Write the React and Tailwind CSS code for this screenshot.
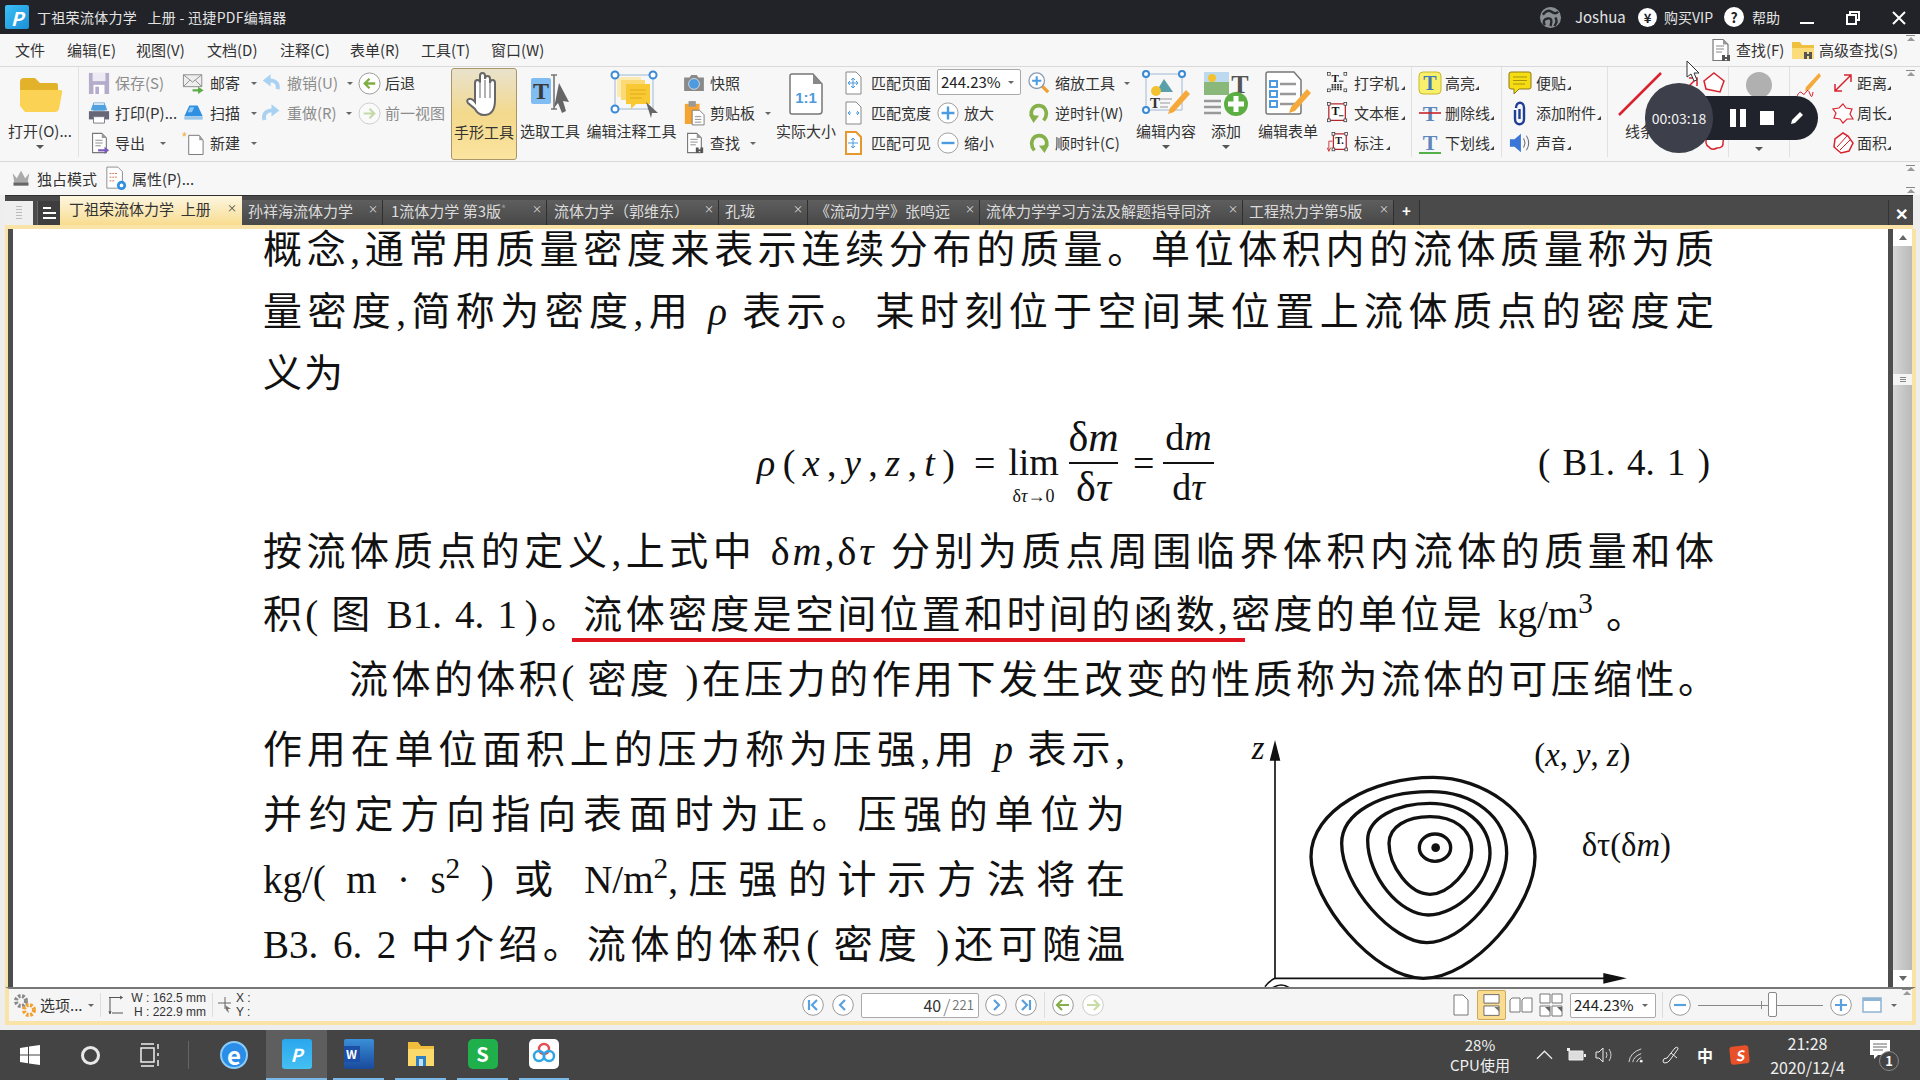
import React from "react";

const Arrow = ({ dark }) => (
  <span className={dark ? "inline-block w-0 h-0 border-x-[4px] border-x-transparent border-t-[4px] border-t-[#555]" : "inline-block w-0 h-0 border-x-[3px] border-x-transparent border-t-[3px] border-t-[#666]"} />
);
const Corner = () => (
  <svg viewBox="0 0 4 4" className="w-[4px] h-[4px] self-end mb-[8px] -ml-[3px] shrink-0"><polygon points="4,0 4,4 0,4" fill="#444" /></svg>
);

const Sv = ({ c, v = "0 0 24 24", children }) => <svg viewBox={v} className={c}>{children}</svg>;

const PageD = ({ stroke = "#777", fill = "#fff" }) => (
  <>
    <path d="M5 1.5h10l5 5v16H5z" fill={fill} stroke={stroke} strokeWidth="1.2" />
    <path d="M15 1.5v5h5z" fill="#999" />
  </>
);

const Nodes = ({ pts }) => pts.map(([x, y], i) => <rect key={i} x={x - 1.5} y={y - 1.5} width="3" height="3" fill="#fff" stroke="#333" strokeWidth="0.8" />);

const I = {
  save: <Sv c="w-[22px] h-[24px]"><path d="M1 1h22v23H1z" fill="#b5abcb" /><path d="M5 1h14v9H5z" fill="#ecebf3" /><path d="M6 14h12v10H6z" fill="#fff" /><path d="M8 16h4v8H8z" fill="#b5abcb" /></Sv>,
  print: <Sv c="w-[22px] h-[24px]"><path d="M6 1h12v8H6z" fill="#fff" stroke="#6aa5d8" /><path d="M5 3h14l2 6H3z" fill="#4fa1e0" /><path d="M1 10h22v9H1z" fill="#667" /><path d="M6 16h12v7H6z" fill="#fff" stroke="#778" /></Sv>,
  exp: <Sv c="w-[22px] h-[24px]"><PageD /><path d="M8 9h8M8 12h8M8 15h6" stroke="#888" /><path d="M11 20h8" stroke="#7d5bb8" strokeWidth="2.4" /><path d="M18 16l5 4-5 4z" fill="#7d5bb8" /></Sv>,
  mail: <Sv c="w-[23px] h-[22px]"><path d="M1 3h20v13H1z" fill="#eee" stroke="#888" /><path d="M1 3l10 8 10-8M1 16l7-7M21 16l-7-7" fill="none" stroke="#888" /><path d="M11 20h8" stroke="#5daa46" strokeWidth="2.4" /><path d="M17 16l6 4-6 4z" fill="#5daa46" /></Sv>,
  scan: <Sv c="w-[24px] h-[20px]"><path d="M7 3h10l6 13H1z" fill="#2f8fe0" /><path d="M8 5h5l-3 6H5z" fill="#8cc8f5" /><path d="M1 16h22v4H1z" fill="#9cc7ea" /></Sv>,
  neu: <Sv c="w-[24px] h-[26px]"><path d="M7 4h11l4 5v15H7z" fill="#fff" stroke="#777" /><path d="M18 4v5h4z" fill="#999" /><text x="0" y="10" fontSize="13" fill="#f0a92c" fontFamily="Liberation Sans">*</text></Sv>,
  undo: <Sv c="w-[21px] h-[22px]"><path d="M19 19c1-5-1-10-9-10" fill="none" stroke="#a9d2f2" strokeWidth="4.5" /><path d="M11 2L2 9l9 7z" fill="#a9d2f2" /></Sv>,
  redo: <Sv c="w-[21px] h-[22px]"><path d="M4 20c-2-6 1-11 9-11" fill="none" stroke="#a9d2f2" strokeWidth="4.5" /><path d="M12 2l9 7-9 7z" fill="#a9d2f2" /></Sv>,
  back: <Sv c="w-[23px] h-[23px]"><circle cx="12" cy="12" r="11" fill="#fff" stroke="#999" /><path d="M18 12H8M12 7l-5 5 5 5" fill="none" stroke="#7fae45" strokeWidth="2.4" /></Sv>,
  fwd: <Sv c="w-[23px] h-[23px]"><circle cx="12" cy="12" r="11" fill="#fafafa" stroke="#ccc" /><path d="M6 12h10M12 7l5 5-5 5" fill="none" stroke="#c5d8a8" strokeWidth="2.2" /></Sv>,
  camera: <Sv c="w-[22px] h-[18px]" v="0 0 24 20"><path d="M1 4h6l2-3h6l2 3h6v15H1z" fill="#8a8a8a" /><circle cx="12" cy="11" r="6" fill="#4c9be0" stroke="#ddd" /></Sv>,
  clip: <Sv c="w-[22px] h-[26px]" v="0 0 24 28"><path d="M2 4h16v22H2z" fill="#f5a431" /><path d="M6 1h8v6H6z" fill="#999" /><path d="M10 11h8l5 5v11H10z" fill="#fff" stroke="#777" /><path d="M13 18h7M13 21h7M13 24h7" stroke="#888" /></Sv>,
  find: <Sv c="w-[24px] h-[26px]"><PageD /><path d="M8 8h8M8 11h8M8 14h6" stroke="#888" /><path d="M14 17h3v6h-3zM19 17h3v6h-3z" fill="#555" /><path d="M16 19h4v2h-4z" fill="#555" /></Sv>,
  fitP: <Sv c="w-[17px] h-[24px]" v="0 0 17 24"><path d="M1 1h10l5 5v17H1z" fill="#fff" stroke="#888" /><path d="M8 7v10M3 12h10M8 7l-2 2M8 7l2 2M8 17l-2-2M8 17l2-2M3 12l2-2M3 12l2 2M13 12l-2-2M13 12l-2 2" stroke="#4c9be0" fill="none" /></Sv>,
  fitW: <Sv c="w-[17px] h-[24px]" v="0 0 17 24"><path d="M1 1h10l5 5v17H1z" fill="#fff" stroke="#888" /><path d="M3 12h3M11 12h3M3 12l2-2M3 12l2 2M14 12l-2-2M14 12l-2 2" stroke="#4c9be0" fill="none" /></Sv>,
  fitV: <Sv c="w-[17px] h-[24px]" v="0 0 17 24"><path d="M1 1h10l5 5v17H1z" fill="#fff" stroke="#e8962e" strokeWidth="2" /><path d="M8 7v10M3 12h10M8 7l-2 2M8 7l2 2M8 17l-2-2M8 17l2-2" stroke="#4c9be0" fill="none" /></Sv>,
  plus: <Sv c="w-[22px] h-[22px]"><circle cx="12" cy="12" r="11" fill="#fff" stroke="#999" /><path d="M12 5v14M5 12h14" stroke="#4c9be0" strokeWidth="2.6" /></Sv>,
  minus: <Sv c="w-[22px] h-[22px]"><circle cx="12" cy="12" r="11" fill="#fff" stroke="#999" /><path d="M5 12h14" stroke="#4c9be0" strokeWidth="2.6" /></Sv>,
  zoom: <Sv c="w-[24px] h-[24px]"><path d="M15 15l7 7" stroke="#f0a030" strokeWidth="3.5" /><circle cx="9.5" cy="9.5" r="8.5" fill="#fff" stroke="#8a9bb0" strokeWidth="1.4" /><path d="M9.5 4.5v10M4.5 9.5h10" stroke="#4c9be0" strokeWidth="2.2" /></Sv>,
  ccw: <Sv c="w-[22px] h-[24px]"><path d="M7 19c-7-7-2-15 5-15s11 9 5 16" fill="none" stroke="#86b04a" strokeWidth="4" /><path d="M1 14l11 1-6 8z" fill="#86b04a" /></Sv>,
  cw: <Sv c="w-[22px] h-[24px]"><path d="M17 19c7-7 2-15-5-15S1 13 7 20" fill="none" stroke="#86b04a" strokeWidth="4" /><path d="M23 14l-11 1 6 8z" fill="#86b04a" /></Sv>,
  type: <Sv c="w-[22px] h-[22px]"><Nodes pts={[[2, 2], [20, 2], [2, 20], [20, 20]]} /><text x="5" y="11" fontSize="12" fontWeight="700" fontFamily="Liberation Serif" fill="#111">T</text><path d="M13 10h5" stroke="#111" /><path d="M5 14h12M5 16.500h12M5 19h12" stroke="#333" strokeWidth="1.8" strokeDasharray="2 1" /></Sv>,
  tbox: <Sv c="w-[22px] h-[22px]"><path d="M2 2h18v18H2z" fill="#fff" stroke="#b3262e" strokeWidth="1.4" /><Nodes pts={[[2, 2], [20, 2], [2, 20], [20, 20]]} /><text x="5" y="14" fontSize="13" fontWeight="700" fontFamily="Liberation Serif" fill="#111">T</text><path d="M13 15h5" stroke="#111" /></Sv>,
  callout: <Sv c="w-[22px] h-[22px]"><path d="M7 2h14v17H7z" fill="#fff" stroke="#b3262e" strokeWidth="1.4" /><Nodes pts={[[7, 2], [21, 2], [7, 19], [21, 19]]} /><text x="9" y="13" fontSize="11" fontWeight="700" fontFamily="Liberation Serif" fill="#111">T.</text><path d="M6 10H2v11M0 17l2 4 2-4" fill="none" stroke="#c33" /></Sv>,
  high: <Sv c="w-[24px] h-[24px]"><rect x="1" y="1" width="22" height="22" rx="4" fill="#f8f06a" stroke="#c9b92c" /><text x="12" y="19" textAnchor="middle" fontSize="20" fontWeight="700" fontFamily="Liberation Serif" fill="#3d78b8">T</text></Sv>,
  strike: <Sv c="w-[24px] h-[24px]"><text x="12" y="20" textAnchor="middle" fontSize="22" fontWeight="700" fontFamily="Liberation Serif" fill="#5d86bd">T</text><path d="M1 12h22" stroke="#c8232c" strokeWidth="1.6" /></Sv>,
  under: <Sv c="w-[24px] h-[24px]"><text x="12" y="19" textAnchor="middle" fontSize="22" fontWeight="700" fontFamily="Liberation Serif" fill="#5d86bd">T</text><path d="M1 22h22" stroke="#55b04a" strokeWidth="2" /></Sv>,
  note: <Sv c="w-[24px] h-[24px]"><path d="M3 1h18q2 0 2 2v13q0 2-2 2H11l-5 5v-5H3q-2 0-2-2V3q0-2 2-2z" fill="#f6dc12" stroke="#8b7a12" /><path d="M5 6h14M5 9.500h14M5 13h12" stroke="#a89412" /></Sv>,
  attach: <Sv c="w-[24px] h-[26px]"><path d="M8 7c0-7 8-7 8 0v11c0 7-9 7-9 0V9M11.500 8v10" fill="none" stroke="#1f3f97" strokeWidth="2.4" /></Sv>,
  sound: <Sv c="w-[24px] h-[22px]"><path d="M1 8h5l7-6v20l-7-6H1z" fill="#3a76d8" /><path d="M16 7q3 5 0 10M19 4q5 8 0 16" fill="none" stroke="#556" /></Sv>,
  crown: <Sv c="w-[22px] h-[20px]"><path d="M2 5l5 6 5-9 5 9 5-6-2 11H4z" fill="#aaa" /><path d="M3 16h18v4H3z" fill="#666" /></Sv>,
  prop: <Sv c="w-[22px] h-[26px]" v="0 0 24 28"><path d="M2 1h12l5 5v18H2z" fill="#fff" stroke="#888" /><path d="M5 8h8M5 12h8M5 16h6" stroke="#d06a4c" strokeDasharray="2 1" /><circle cx="18" cy="21" r="5" fill="#2f8fe0" /><circle cx="18" cy="21" r="2" fill="#fff" /></Sv>,
};

const Row = ({ icon, text, off, arrow, corner, g = "gap-[5px]", ib = "w-[22px]", arrowCls = "ml-[10px]" }) => (
  <div className={"flex items-center h-[30px] whitespace-nowrap " + g}>
    <span className={"flex items-center justify-center shrink-0 " + ib}>{icon}</span>
    <span className={off ? "text-[#8c8c8c]" : "text-[#333]"}>{text}</span>
    {arrow && <span className={"flex items-center " + arrowCls}><Arrow /></span>}
    {corner && <Corner />}
  </div>
);

const Big = ({ w, icon, text, arrow }) => (
  <div className={"flex flex-col items-center shrink-0 " + w}>
    <div className="h-[54px] flex items-center justify-center">{icon}</div>
    <div className="h-[20px] leading-[20px] text-[#333] whitespace-nowrap">{text}</div>
    {arrow && <div className="h-[11px] flex items-center"><Arrow dark /></div>}
  </div>
);

const Tab = ({ w, text, star, pl = "pl-[6px]" }) => (
  <div className={"h-[25px] pb-[3px] relative flex items-center border-r border-r-[#2f2f2f] bg-gradient-to-b from-[#5e5e5e] to-[#484848] text-[#dcdcdc] whitespace-nowrap shrink-0 " + w + " " + pl}>
    {text}{star && <span className="text-[#999] text-[11px] -mt-[6px]">*</span>}
    <span className="absolute right-[4px] top-[3px] text-[10px] leading-[12px] text-[#ddd]">×</span>
  </div>
);

const NavBtn = ({ d, c = "#5aa0dd", m, faded }) => (
  <svg viewBox="0 0 22 22" className={"w-[22px] h-[22px] shrink-0 " + (m || "")}>
    <circle cx="11" cy="11" r="10.300" fill="#fff" stroke={faded ? "#ccc" : "#9a9a9a"} />
    <path d={d} fill="none" stroke={c} strokeWidth="2.200" />
  </svg>
);

const Line = ({ c, children }) => (
  <div className={"[text-align:justify] [text-align-last:justify] " + c}>{children}</div>
);

const Tbtn = ({ c, children }) => <div className={"flex items-center justify-center shrink-0 " + c}>{children}</div>;

const Chev = ({ c }) => (
  <div className={"absolute flex flex-col items-center gap-[1px] " + c}>
    <span className="w-[9px] h-[1px] bg-[#888]" />
    <span className="w-0 h-0 border-x-[4px] border-x-transparent border-b-[4px] border-b-[#999]" />
  </div>
);

const it = "italic";

export default function App() {
  return (
    <div className="w-[1920px] h-[1080px] relative overflow-hidden flex flex-col bg-[#eeeeee] text-[15px] leading-[20px] font-['Noto_Sans_CJK_SC','Noto_Sans',sans-serif]">
      {/* Title bar */}
      <div className="h-[34px] bg-[#212328] flex items-center text-[#e4e4e4] shrink-0 whitespace-nowrap">
        <div className="ml-[5px] w-[24px] h-[24px] rounded-[2px] bg-gradient-to-br from-[#3cc0f5] to-[#1a8fd8] flex items-center justify-center text-white font-bold italic text-[19px] leading-none">P</div>
        <span className="ml-[8px] text-[14px] tracking-[0.3px]">丁祖荣流体力学&nbsp;&nbsp;&nbsp;上册&nbsp;-&nbsp;迅捷PDF编辑器</span>
        <div className="ml-auto flex items-center">
          <svg viewBox="0 0 24 24" className="w-[23px] h-[23px]"><circle cx="12" cy="12" r="11" fill="#8a8f94" /><path d="M4 9q5-6 9-3t7 0M6 20q-3-6 3-7t3 8M16 21q4-5 1-9" fill="none" stroke="#26282c" strokeWidth="2.500" /></svg>
          <span className="ml-[13px] text-[15px] w-[47px]">Joshua</span>
          <span className="ml-[16px] w-[19px] h-[19px] rounded-full bg-white text-[#212328] font-bold text-[13px] leading-none flex items-center justify-center">¥</span>
          <span className="ml-[7px] text-[14px] w-[50px]">购买VIP</span>
          <span className="ml-[10px] w-[20px] h-[20px] rounded-full bg-white text-[#212328] font-bold text-[14px] leading-none flex items-center justify-center">?</span>
          <span className="ml-[8px] text-[14px] w-[28px]">帮助</span>
          <span className="ml-[20px] w-[14px] h-[2px] bg-white mt-[12px] mb-0" />
          <svg viewBox="0 0 14 14" className="ml-[32px] w-[14px] h-[14px] mt-[2px]"><path d="M4 4V1h9v8h-3M1 4h9v9H1z" fill="none" stroke="#fff" strokeWidth="2" /></svg>
          <svg viewBox="0 0 14 14" className="ml-[32px] mr-[14px] w-[14px] h-[14px] mt-[2px]"><path d="M1 1l12 12M13 1L1 13" stroke="#fff" strokeWidth="2" /></svg>
        </div>
      </div>

      {/* Menu */}
      <div className="h-[33px] bg-[#f7f7f7] border-b border-b-[#d9d9d9] flex items-center pl-[15px] text-[#333] shrink-0 whitespace-nowrap">
        <span className="w-[52px]">文件</span>
        <span className="w-[69px]">编辑(E)</span>
        <span className="w-[71px]">视图(V)</span>
        <span className="w-[73px]">文档(D)</span>
        <span className="w-[70px]">注释(C)</span>
        <span className="w-[71px]">表单(R)</span>
        <span className="w-[70px]">工具(T)</span>
        <span>窗口(W)</span>
        <div className="ml-auto mr-[22px] flex items-center">
          {I.find}
          <span className="ml-[4px] w-[55px]">查找(F)</span>
          <svg viewBox="0 0 24 24" className="w-[24px] h-[24px]"><path d="M1 4h8l2 3h12v14H1z" fill="#f0c040" /><path d="M1 10h22v11H1z" fill="#fbdc7a" /><path d="M13 14h3v7h-3zM18 14h3v7h-3zM15 16h4v2h-4z" fill="#555" /></svg>
          <span className="ml-[4px]">高级查找(S)</span>
        </div>
      </div>

      {/* Ribbon */}
      <div className="h-[95px] bg-[#f7f7f7] border-b border-b-[#d9d9d9] flex shrink-0 relative">
        <div className="w-[79px] h-[90px] shrink-0 border-r border-r-[#e2e2e2] pl-[4px]">
          <Big w="w-[72px]" text="打开(O)..." arrow icon={
            <svg viewBox="0 0 46 36" className="w-[46px] h-[36px]"><path d="M3 6q0-4 4-4h11l5 5h16q2 0 2 2v8H3z" fill="#e3b22b" /><path d="M3 30V14h40q3 0 2 3l-3 16q-1 3-4 3H8z" fill="#fcd255" /></svg>
          } />
        </div>
        <div className="w-[103px] pl-[9px] shrink-0 pt-[1px]">
          <Row icon={I.save} text="保存(S)" off />
          <Row icon={I.print} text="打印(P)..." />
          <Row icon={I.exp} text="导出" arrow />
        </div>
        <div className="w-[79px] shrink-0 pt-[1px]">
          <Row ib="w-[23px]" icon={I.mail} text="邮寄" arrow arrowCls="ml-[6px]" />
          <Row ib="w-[23px]" icon={I.scan} text="扫描" arrow arrowCls="ml-[6px]" />
          <Row ib="w-[23px]" icon={I.neu} text="新建" arrow arrowCls="ml-[6px]" />
        </div>
        <div className="w-[97px] shrink-0 pt-[1px]">
          <Row ib="w-[21px]" icon={I.undo} text="撤销(U)" off arrow arrowCls="ml-[4px]" />
          <Row ib="w-[21px]" icon={I.redo} text="重做(R)" off arrow arrowCls="ml-[4px]" />
        </div>
        <div className="w-[93px] shrink-0 pt-[1px]">
          <Row ib="w-[23px]" g="gap-[4px]" icon={I.back} text="后退" />
          <Row ib="w-[23px]" g="gap-[4px]" icon={I.fwd} text="前一视图" off />
        </div>
        <div className="w-[66px] h-[92px] mt-[1px] shrink-0 rounded-[3px] border border-[#a8976a] bg-gradient-to-b from-[#e9e2cc] via-[#f3d98c] to-[#fbe49f] flex flex-col items-center">
          <div className="h-[53px] flex items-center">
            <svg viewBox="0 0 36 48" className="w-[36px] h-[48px]"><path d="M9 30V11q0-3 2.500-3t2.500 3v-7q0-3 2.500-3t2.500 3v3q0-3 2.500-3t2.500 3v4q0-3 2.500-3t2.500 3v17q0 15-11 15-6 0-9-6L2 31q-2-3 1-4t6 3z" fill="#fff" stroke="#666" strokeWidth="2" /><path d="M14 10v16M19 8v18M24 11v15" stroke="#999" strokeWidth="1.500" /></svg>
          </div>
          <div className="h-[20px] text-[#333] whitespace-nowrap">手形工具</div>
        </div>
        <Big w="w-[66px]" text="选取工具" icon={
          <svg viewBox="0 0 40 44" className="w-[40px] h-[44px]"><rect x="1" y="6" width="20" height="26" rx="2" fill="#7fbdf2" /><text x="11" y="27" textAnchor="middle" fontSize="24" fontWeight="700" fontFamily="Liberation Serif" fill="#3a3a3a">T</text><path d="M24 3v34M21 3h6M21 37h6" stroke="#777" strokeWidth="1.600" /><path d="M29 11l10 19-6-1 3 10-4 2-4-10-4 5z" fill="#666" /></svg>
        } />
        <Big w="w-[97px]" text="编辑注释工具" icon={
          <svg viewBox="0 0 50 48" className="w-[50px] h-[48px] ml-[6px]"><path d="M5 5h38v34H5z" fill="none" stroke="#9fb8d2" /><path d="M7 7h24v20H7z" fill="#fdeab0" /><path d="M11 10h24v20H11z" fill="#fbd975" /><path d="M16 14h24v20H26l-5 5v-5h-5z" fill="#f9c933" /><path d="M20 20h16M20 24h16M20 28h12" stroke="#e3a91c" /><circle cx="5" cy="5" r="3.500" fill="#fff" stroke="#3a8ad8" strokeWidth="2" /><circle cx="43" cy="5" r="3.500" fill="#fff" stroke="#3a8ad8" strokeWidth="2" /><circle cx="5" cy="39" r="3.500" fill="#fff" stroke="#3a8ad8" strokeWidth="2" /><path d="M36 32l12 11-6 0-1 5z" fill="#666" /></svg>
        } />
        <div className="w-[96px] pl-[3px] shrink-0 pt-[1px]">
          <Row icon={I.camera} text="快照" />
          <Row icon={I.clip} text="剪贴板" arrow arrowCls="ml-[5px]" />
          <Row icon={I.find} text="查找" arrow arrowCls="ml-[5px]" />
        </div>
        <Big w="w-[60px]" text="实际大小" icon={
          <svg viewBox="0 0 34 42" className="w-[34px] h-[42px]"><path d="M3 1h21l9 10v27q0 3-3 3H3q-2 0-2-2V3q0-2 2-2z" fill="#fff" stroke="#777" strokeWidth="1.500" /><path d="M24 1v10h9z" fill="#888" /><text x="17" y="30" textAnchor="middle" fontSize="15" fontWeight="700" fontFamily="Liberation Sans" fill="#4c9be0">1:1</text></svg>
        } />
        <div className="w-[101px] pl-[9px] shrink-0 pt-[1px]">
          <Row ib="w-[17px]" g="gap-[9px]" icon={I.fitP} text="匹配页面" />
          <Row ib="w-[17px]" g="gap-[9px]" icon={I.fitW} text="匹配宽度" />
          <Row ib="w-[17px]" g="gap-[9px]" icon={I.fitV} text="匹配可见" />
        </div>
        <div className="w-[91px] shrink-0 pt-[1px]">
          <div className="h-[30px] flex items-center">
            <div className="w-[84px] h-[26px] bg-white border border-[#aaa] rounded-[2px] flex items-center pl-[3px] text-[#222] text-[15px] -mt-[2px]">244.23%<span className="ml-[7px] flex"><Arrow /></span></div>
          </div>
          <Row icon={I.plus} text="放大" />
          <Row icon={I.minus} text="缩小" />
        </div>
        <div className="w-[108px] shrink-0 pt-[1px]">
          <Row icon={I.zoom} text="缩放工具" arrow arrowCls="ml-[4px]" />
          <Row icon={I.ccw} text="逆时针(W)" />
          <Row icon={I.cw} text="顺时针(C)" />
        </div>
        <Big w="w-[60px]" text="编辑内容" arrow icon={
          <svg viewBox="0 0 48 48" className="w-[48px] h-[48px]"><path d="M4 4h36v36H4z" fill="none" stroke="#9fb8d2" /><path d="M14 22l8-13 9 13z" fill="#5aa0a8" /><circle cx="14" cy="21" r="5" fill="#f2c230" /><text x="8" y="38" fontSize="15" fontWeight="700" fontFamily="Liberation Serif" fill="#333">T</text><path d="M18 29h12M18 33h10M18 37h8" stroke="#999" /><path d="M44 20l4 4-16 18-6 2 2-6z" fill="#f6a93b" /><circle cx="4" cy="4" r="3" fill="#fff" stroke="#3a8ad8" strokeWidth="2" /><circle cx="40" cy="4" r="3" fill="#fff" stroke="#3a8ad8" strokeWidth="2" /><circle cx="4" cy="40" r="3" fill="#fff" stroke="#3a8ad8" strokeWidth="2" /></svg>
        } />
        <Big w="w-[60px]" text="添加" arrow icon={
          <svg viewBox="0 0 46 46" className="w-[46px] h-[46px]"><path d="M1 1h25v23H1z" fill="#8ab87a" /><path d="M1 1h25v10H1z" fill="#bcd9ef" /><circle cx="9" cy="7" r="4" fill="#f2c230" /><text x="37" y="22" textAnchor="middle" fontSize="26" fontWeight="700" fontFamily="Liberation Serif" fill="#555">T</text><path d="M1 30h17M1 36h17M1 42h17" stroke="#999" strokeWidth="2.500" /><circle cx="33" cy="33" r="12" fill="#5cae42" /><path d="M33 25v16M25 33h16" stroke="#fff" strokeWidth="5" /></svg>
        } />
        <Big w="w-[64px]" text="编辑表单" icon={
          <svg viewBox="0 0 46 46" className="w-[46px] h-[46px]"><path d="M3 1h26l7 8v32q0 2-2 2H3q-2 0-2-2V3q0-2 2-2z" fill="#fff" stroke="#777" strokeWidth="1.500" /><path d="M5 10h7v6H5zM5 20h7v6H5zM5 30h7v6H5z" fill="none" stroke="#4c9be0" strokeWidth="2" /><path d="M15 13h16M15 23h16M15 33h16" stroke="#999" strokeWidth="2.500" /><path d="M42 18l4 4-16 18-6 2 2-6z" fill="#f6a93b" /></svg>
        } />
        <div className="w-[92px] pl-[7px] shrink-0 pt-[1px] border-r border-r-[#e0e0e0] h-[90px]">
          <Row icon={I.type} text="打字机" corner />
          <Row icon={I.tbox} text="文本框" corner />
          <Row icon={I.callout} text="标注" corner />
        </div>
        <div className="w-[90px] pl-[6px] shrink-0 pt-[1px] border-r border-r-[#e0e0e0] h-[90px]">
          <Row ib="w-[24px]" g="gap-[3px]" icon={I.high} text="高亮" corner />
          <Row ib="w-[24px]" g="gap-[3px]" icon={I.strike} text="删除线" corner />
          <Row ib="w-[24px]" g="gap-[3px]" icon={I.under} text="下划线" corner />
        </div>
        <div className="w-[106px] pl-[6px] shrink-0 pt-[1px] border-r border-r-[#e0e0e0] h-[90px]">
          <Row ib="w-[24px]" g="gap-[4px]" icon={I.note} text="便贴" corner />
          <Row ib="w-[24px]" g="gap-[4px]" icon={I.attach} text="添加附件" corner />
          <Row ib="w-[24px]" g="gap-[4px]" icon={I.sound} text="声音" corner />
        </div>
        <div className="w-[121px] shrink-0 border-r border-r-[#e0e0e0] h-[90px] flex">
          <Big w="w-[64px]" text="线条" icon={
            <svg viewBox="0 0 46 46" className="w-[46px] h-[46px]"><path d="M2 44L44 2" stroke="#d8232f" strokeWidth="2.500" /></svg>
          } />
          <div className="pl-[8px] pt-[4px] flex flex-col">
            <div className="flex gap-[2px]">
              <svg viewBox="0 0 20 24" className="w-[20px] h-[24px]"><path d="M2 22L16 8M9 7h8v8" fill="none" stroke="#d8232f" strokeWidth="1.500" /></svg>
              <svg viewBox="0 0 24 24" className="w-[24px] h-[24px]"><path d="M12 2l10 8-4 11-14-3-2-8z" fill="#fff" stroke="#d8232f" strokeWidth="1.500" /></svg>
            </div>
            <div className="h-[34px]" />
            <div className="flex justify-end">
              <svg viewBox="0 0 24 24" className="w-[24px] h-[24px]"><path d="M5 8q2-5 6-2 4-4 7 0 5 1 3 7 1 6-6 6-5 3-8-1-5-3-2-10z" fill="#fff" stroke="#d8232f" strokeWidth="1.500" /></svg>
            </div>
          </div>
        </div>
        <div className="w-[61px] shrink-0 border-r border-r-[#e0e0e0] h-[90px] flex flex-col items-center">
          <svg viewBox="0 0 28 28" className="w-[28px] h-[28px] mt-[5px]"><ellipse cx="14" cy="13" rx="13" ry="13" fill="#b0b0b0" /><path d="M7 24h14v4H7z" fill="#999" /></svg>
          <div className="h-[47px]" />
          <Arrow dark />
        </div>
        <div className="pl-[7px] w-[42px] shrink-0 pt-[5px]">
          <svg viewBox="0 0 24 26" className="w-[24px] h-[26px]"><path d="M22 1l2 3L12 18l-4 1 1-4z" fill="#f6a93b" /><path d="M0 24q3-6 5-3t4-1 4 2 3-2" fill="none" stroke="#d8232f" /></svg>
        </div>
        <div className="shrink-0 pt-[1px]">
          <Row g="gap-[3px]" icon={<svg viewBox="0 0 22 22" className="w-[22px] h-[22px]"><path d="M3 19L19 3M12 3h7v7M3 12v7h7" fill="none" stroke="#d8232f" strokeWidth="1.500" /></svg>} text="距离" corner />
          <Row g="gap-[3px]" icon={<svg viewBox="0 0 22 22" className="w-[22px] h-[22px]"><path d="M11 2l3 4 6 1-2 5 3 5-6 0-4 4-3-4-6-1 2-5-3-4 6-1z" fill="#fff" stroke="#d8232f" strokeWidth="1.200" /></svg>} text="周长" corner />
          <Row g="gap-[3px]" icon={<svg viewBox="0 0 22 22" className="w-[22px] h-[22px]"><path d="M11 1l5 3 5 7-4 8-8 2-7-6 1-8z" fill="#fff" stroke="#d8232f" strokeWidth="1.500" /><path d="M5 15L15 4M8 18L19 7" stroke="#d8232f" /></svg>} text="面积" corner />
        </div>
      </div>

      {/* Quick access */}
      <div className="h-[33px] bg-[#f7f7f7] flex items-center pl-[10px] text-[#333] shrink-0 whitespace-nowrap">
        {I.crown}
        <span className="ml-[5px]">独占模式</span>
        <span className="ml-[8px]">{I.prop}</span>
        <span className="ml-[5px]">属性(P)...</span>
      </div>

      {/* Tabs */}
      <div className="ml-[5px] w-[1908px] h-[30px] shrink-0 bg-[#4a4a4a] border-t border-t-[#2f2f2f] flex items-end relative">
        <div className="w-[28px] h-[24px] bg-[#efefef] flex items-center justify-center shrink-0">
          <span className="w-[6px] h-[14px] bg-[repeating-linear-gradient(180deg,#bbb_0,#bbb_1px,transparent_1px,transparent_3px)]" />
        </div>
        <div className="ml-[4px] w-[23px] h-[24px] bg-[#3e3e3e] border-l border-l-[#666] flex flex-col items-center justify-center gap-[3px] shrink-0">
          <span className="w-[8px] h-[2px] bg-white self-start ml-[5px]" />
          <span className="w-[13px] h-[2px] bg-white" />
          <span className="w-[13px] h-[2px] bg-white" />
        </div>
        <div className="w-[182px] h-[29px] pl-[9px] pb-[3px] relative flex items-center bg-gradient-to-b from-[#fdf6e0] to-[#f8dc8e] text-[#333] whitespace-nowrap shrink-0">
          丁祖荣流体力学&nbsp;&nbsp;上册
          <span className="absolute right-[5px] top-[6px] text-[10px] leading-[12px] text-[#444]">×</span>
        </div>
        <Tab w="w-[141px]" text="孙祥海流体力学" />
        <Tab w="w-[164px]" pl="pl-[8px]" text="1流体力学 第3版" star />
        <Tab w="w-[172px]" pl="pl-[7px]" text="流体力学（郭维东）" />
        <Tab w="w-[89px]" text="孔珑" />
        <Tab w="w-[172px]" pl="pl-[7px]" text="《流动力学》张鸣远" />
        <Tab w="w-[263px]" text="流体力学学习方法及解题指导同济" />
        <Tab w="w-[151px]" text="工程热力学第5版" />
        <div className="w-[26px] h-[25px] pb-[3px] border-r border-r-[#2f2f2f] flex items-center justify-center text-white font-bold shrink-0">+</div>
        <div className="ml-auto w-[25px] h-[25px] border-l border-l-[#333] flex items-center justify-center text-white font-bold text-[16px] leading-none">✕</div>
      </div>
      <div className="ml-[5px] w-[1908px] h-[4px] bg-[#f9e3a6] shrink-0" />

      {/* Document row */}
      <div className="ml-[5px] h-[758px] flex shrink-0">
        <div className="w-[3px] bg-[#f9e3a6] shrink-0" />
        <div className="w-[5px] bg-[#4d4d4d] shrink-0" />
        <div className="w-[1875px] bg-white relative overflow-hidden shrink-0 text-[#111] text-[39px] font-['Liberation_Serif','Noto_Sans_CJK_SC',serif]">
          <Line c="ml-[250px] w-[1451px] h-[53px] leading-[42px]">概念,通常用质量密度来表示连续分布的质量。单位体积内的流体质量称为质</Line>
          <Line c="ml-[250px] w-[1451px] h-[62px] leading-[60px]">量密度,简称为密度,用 <span className={it}>ρ</span> 表示。某时刻位于空间某位置上流体质点的密度定</Line>
          <Line c="ml-[250px] w-[80px] h-[61px] leading-[59px]">义为</Line>

          {/* Formula */}
          <div className="h-[117px] pt-[10px] flex items-start pl-[744px] text-[38px]">
            <div className="h-[95px] w-[198px] flex items-center justify-between">
              <span className={it}>ρ</span><span>(</span><span className={it}>x</span><span>,</span><span className={it}>y</span><span>,</span><span className={it}>z</span><span>,</span><span className={it}>t</span><span>)</span>
            </div>
            <div className="h-[95px] flex items-center ml-[19px] w-[33px]">=</div>
            <div className="h-[95px] flex flex-col items-center w-[53px] ml-[0px]">
              <div className="h-[27px]" />
              <div className="h-[40px] leading-[40px] text-[38px]">lim</div>
              <div className="h-[28px] leading-[28px] text-[18px] whitespace-nowrap">δ<span className={it}>τ</span>→0</div>
            </div>
            <div className="w-[49px] ml-[9px] h-[95px] flex flex-col items-center">
              <div className="h-[47px] leading-[44px] text-[42px] whitespace-nowrap">δ<span className={it}>m</span></div>
              <div className="w-[49px] h-[2px] bg-[#111] shrink-0" />
              <div className="h-[46px] leading-[46px] text-[42px] whitespace-nowrap">δ<span className={it}>τ</span></div>
            </div>
            <div className="h-[95px] flex items-center ml-[15px] w-[30px]">=</div>
            <div className="w-[51px] h-[95px] flex flex-col items-center">
              <div className="h-[47px] leading-[44px] whitespace-nowrap">d<span className={it}>m</span></div>
              <div className="w-[51px] h-[2px] bg-[#111] shrink-0" />
              <div className="h-[46px] leading-[46px] whitespace-nowrap">d<span className={it}>τ</span></div>
            </div>
            <div className="h-[95px] flex items-center ml-[324px] w-[172px]">
              <Line c="w-[172px] text-[37px]">( B1. 4. 1 )</Line>
            </div>
          </div>

          <Line c="ml-[250px] w-[1451px] h-[62px] leading-[60px]">按流体质点的定义,上式中 <span className="tracking-[3px] text-[40px]">δ<span className={it}>m</span>,δ<span className={it}>τ</span></span> 分别为质点周围临界体积内流体的质量和体</Line>
          <Line c="ml-[250px] w-[1382px] h-[62px] leading-[62px]">积( 图 B1. 4. 1&thinsp;)。流体密度是空间位置和时间的函数,密度的单位是 kg/m<sup>3</sup> 。</Line>
          <Line c="ml-[336px] w-[1368px] h-[68px] leading-[68px]">流体的体积( 密度 )在压力的作用下发生改变的性质称为流体的可压缩性。</Line>

          <div className="flex mt-[3px] ml-[250px]">
            <div className="w-[862px] shrink-0">
              <Line c="h-[65px] leading-[65px]">作用在单位面积上的压力称为压强,用 <span className={it}>p</span> 表示,</Line>
              <Line c="h-[65px] leading-[65px]">并约定方向指向表面时为正。压强的单位为</Line>
              <Line c="h-[65px] leading-[65px]">kg/( m · s<sup>2</sup> ) 或 N/m<sup>2</sup>,压强的计示方法将在</Line>
              <Line c="h-[65px] leading-[65px]">B3. 6. 2 中介绍。流体的体积( 密度 )还可随温</Line>
            </div>
            <svg viewBox="0 0 1560 810" className="w-[520px] h-[270px] ml-[75px] mt-[3px] shrink-0">
              <path d="M225 775V100" stroke="#111" strokeWidth="5" />
              <path d="M225 60l-16 62h32z" fill="#111" />
              <path d="M225 775H1230" stroke="#111" strokeWidth="5" />
              <path d="M1280 775l-70-16v32z" fill="#111" />
              <path d="M225 775q-20 10-30 25M215 805q30-20 55 0" fill="none" stroke="#111" strokeWidth="5" />
              <g fill="none" stroke="#111" strokeWidth="10">
                <path d="M700 172C850 172 1005 280 1005 410C1005 560 820 775 670 775C520 775 333 540 333 410C333 270 520 172 700 172Z" />
                <path d="M690 215C820 215 920 290 920 400C920 510 790 668 680 668C580 668 425 500 425 370C425 280 540 215 690 215Z" />
                <path d="M690 250C790 250 870 310 870 400C870 490 770 585 685 585C600 585 503 470 503 360C503 295 590 250 690 250Z" />
                <path d="M690 290C760 290 815 325 815 390C815 450 745 523 690 523C630 523 567 440 567 370C567 320 620 290 690 290Z" />
                <ellipse cx="705" cy="383" rx="47" ry="41" />
              </g>
              <circle cx="707" cy="383" r="13" fill="#111" />
              <g fontFamily="Liberation Serif" fontSize="98" fill="#111">
                <text x="155" y="118" fontStyle="italic">z</text>
                <text x="1003" y="138"><tspan>(</tspan><tspan fontStyle="italic">x</tspan><tspan>, </tspan><tspan fontStyle="italic">y</tspan><tspan>, </tspan><tspan fontStyle="italic">z</tspan><tspan>)</tspan></text>
                <text x="1145" y="408">δτ(δ<tspan fontStyle="italic">m</tspan>)</text>
              </g>
            </svg>
          </div>

          {/* red annotation underline */}
          <div className="absolute left-[559px] top-[409px] w-[673px] h-[4px] bg-[#e0141e]" />
        </div>
        <div className="w-[5px] bg-[#4d4d4d] shrink-0" />
        <div className="w-[19px] flex flex-col shrink-0 bg-gradient-to-r from-[#d6d6d6] to-[#b9b9b9]">
          <div className="h-[17px] bg-white flex items-center justify-center shrink-0"><span className="w-0 h-0 border-x-[4px] border-x-transparent border-b-[5px] border-b-[#666]" /></div>
          <div className="h-[128px] shrink-0" />
          <div className="h-[11px] bg-[#f4f4f4] flex flex-col items-center justify-center gap-[1px] shrink-0">
            <span className="w-[6px] h-[1px] bg-[#888]" /><span className="w-[6px] h-[1px] bg-[#888]" /><span className="w-[6px] h-[1px] bg-[#888]" />
          </div>
          <div className="flex-1" />
          <div className="h-[17px] bg-white flex items-center justify-center shrink-0"><span className="w-0 h-0 border-x-[4px] border-x-transparent border-t-[5px] border-t-[#666]" /></div>
        </div>
        <div className="w-[4px] bg-[#f9e3a6] shrink-0" />
      </div>

      {/* Status bar */}
      <div className="ml-[5px] w-[1911px] h-[34px] shrink-0 border-x-[4px] border-x-[#f9e3a6] bg-[#f5f5f5] border-t-[2px] border-t-[#777] flex items-center text-[#333] whitespace-nowrap">
        <svg viewBox="0 0 24 24" className="ml-[3px] w-[24px] h-[24px] shrink-0"><circle cx="9" cy="8" r="5" fill="none" stroke="#8a8a8a" strokeWidth="4" strokeDasharray="2.500 1.500" /><circle cx="17" cy="17" r="5" fill="none" stroke="#f0a030" strokeWidth="4" strokeDasharray="2.500 1.500" /></svg>
        <span className="ml-[4px] w-[48px]">选项...</span>
        <Arrow />
        <span className="ml-[6px] w-[1px] h-[24px] bg-[#ddd]" />
        <svg viewBox="0 0 16 20" className="ml-[7px] w-[16px] h-[20px] shrink-0"><path d="M1 2.500h13M12 1l2.500 1.500L12 4M2 3v15M1 16l1 3 1-3M4 18h11" fill="none" stroke="#555" /></svg>
        <div className="ml-[2px] w-[80px] text-[12px] flex flex-col items-end text-[#333] font-['Liberation_Sans',sans-serif]">
          <span className="h-[14px] leading-[14px]">W : 162.5 mm</span>
          <span className="h-[14px] leading-[14px]">H : 222.9 mm</span>
        </div>
        <span className="ml-[6px] w-[1px] h-[24px] bg-[#ddd]" />
        <svg viewBox="0 0 16 20" className="ml-[4px] w-[16px] h-[20px] shrink-0"><path d="M8 2v12M1 8h13" stroke="#666" /><path d="M8 10l6 4h-3l1 4-3-3z" fill="#777" /></svg>
        <div className="ml-[3px] w-[20px] text-[12px] flex flex-col font-['Liberation_Sans',sans-serif]">
          <span className="h-[14px] leading-[14px]">X :</span>
          <span className="h-[14px] leading-[14px]">Y :</span>
        </div>
        <NavBtn m="ml-[546px]" d="M7 6v10M15 6l-5 5 5 5" />
        <NavBtn m="ml-[8px]" d="M13 6l-5 5 5 5" />
        <div className="ml-[7px] w-[118px] h-[25px] bg-white border border-[#aaa] rounded-[2px] flex items-center justify-end pr-[4px] shrink-0 text-[16px]">
          40<span className="text-[#777] text-[18px] mx-[2px] font-light">/</span><span className="text-[#777] text-[13px]">221</span>
        </div>
        <NavBtn m="ml-[6px]" d="M9 6l5 5-5 5" />
        <NavBtn m="ml-[8px]" d="M15 6v10M7 6l5 5-5 5" />
        <span className="ml-[7px] w-[1px] h-[26px] bg-[#ddd]" />
        <NavBtn m="ml-[7px]" c="#86ae4a" d="M17 11H6M10 6l-5 5 5 5" />
        <NavBtn m="ml-[8px]" c="#c9dba6" faded d="M5 11h11M12 6l5 5-5 5" />

        <svg viewBox="0 0 16 22" className="ml-[349px] w-[16px] h-[22px] shrink-0"><path d="M1 1h9l5 5v15H1z" fill="#fff" stroke="#777" /></svg>
        <div className="ml-[8px] w-[29px] h-[30px] bg-[#f9dc8f] border border-[#c9a95a] rounded-[2px] flex items-center justify-center shrink-0">
          <svg viewBox="0 0 18 24" className="w-[17px] h-[24px]"><path d="M1 1h16v9H1z" fill="#fff" stroke="#666" /><path d="M1 13h16v10H1z" fill="#fff" stroke="#666" /><path d="M12 14l5 5v-5z" fill="#777" /></svg>
        </div>
        <svg viewBox="0 0 24 16" className="ml-[3px] w-[24px] h-[16px] shrink-0"><path d="M1 3l2-2h8v14H1zM13 3l2-2h8v14H13z" fill="#fff" stroke="#777" /></svg>
        <svg viewBox="0 0 24 24" className="ml-[6px] w-[24px] h-[24px] shrink-0"><path d="M1 1h10v9H1zM13 1h10v9H13zM1 13h10v10H1zM13 13h10v10H13z" fill="#fff" stroke="#777" /><path d="M6 14l5 5v-5zM18 14l5 5v-5z" fill="#666" /></svg>
        <div className="ml-[7px] w-[86px] h-[25px] bg-white border border-[#aaa] rounded-[2px] flex items-center pl-[3px] text-[#222] shrink-0">244.23%<span className="ml-[8px] flex"><Arrow /></span></div>
        <span className="ml-[6px] w-[1px] h-[26px] bg-[#ddd]" />
        <NavBtn m="ml-[6px]" d="M5 11h12" />
        <div className="ml-[7px] w-[125px] h-[20px] flex items-center relative shrink-0">
          <span className="w-full h-[1px] bg-[#888]" />
          <span className="absolute left-[63px] top-[6px] w-[1px] h-[8px] bg-[#888]" />
          <span className="absolute left-[70px] top-[-3px] w-[9px] h-[25px] bg-white border border-[#888] rounded-[2px]" />
        </div>
        <NavBtn m="ml-[7px]" d="M11 5v12M5 11h12" />
        <svg viewBox="0 0 20 16" className="ml-[10px] w-[20px] h-[16px] shrink-0"><path d="M1 1h18v14H1z" fill="#fff" stroke="#8fb4d4" strokeWidth="1.500" /><path d="M1 1h18v3H1z" fill="#8fb4d4" /></svg>
        <span className="ml-[9px] flex"><Arrow /></span>
      </div>
      <div className="ml-[5px] w-[1911px] h-[4px] bg-[#f9e3a6] shrink-0" />
      <div className="h-[5px] shrink-0 bg-[#eeeeee]" />

      {/* Taskbar */}
      <div className="h-[50px] bg-[#444444] flex items-center text-[#f0f0f0] shrink-0 whitespace-nowrap">
        <svg viewBox="0 0 20 20" className="ml-[20px] w-[20px] h-[20px] shrink-0"><path d="M0 3l8-1.200V9.500H0zM9 1.600L20 0v9.500H9zM0 10.500h8v7.700L0 17zM9 10.500h11V20L9 18.400z" fill="#fff" /></svg>
        <span className="ml-[41px] w-[19px] h-[19px] rounded-full border-[3px] border-[#e8e8e8] shrink-0" />
        <svg viewBox="0 0 20 24" className="ml-[40px] w-[20px] h-[24px] shrink-0"><path d="M1 5h13v14H1zM1 1h13M1 23h13M18 1v5M18 10v3M18 17v6" fill="none" stroke="#eee" strokeWidth="1.500" /></svg>
        <span className="ml-[28px] w-[1px] h-[28px] bg-[#666]" />
        <div className="ml-[31px] w-[28px] h-[28px] rounded-full bg-[#2a8ee8] border-[2px] border-[#8ccbf7] flex items-center justify-center text-white font-bold text-[24px] leading-none shrink-0">e</div>
        <div className="ml-[18px] w-[61px] h-[50px] bg-[#5e5e5e] flex items-center justify-center border-b-[2px] border-b-[#7ab8e8] shrink-0">
          <div className="w-[30px] h-[30px] rounded-[3px] bg-gradient-to-b from-[#2aa6ee] to-[#45c0f2] flex items-center justify-center text-white italic font-bold text-[18px] leading-none">P</div>
        </div>
        <Tbtn c="ml-[6px] w-[51px] h-[50px] border-b-[2px] border-b-[#7ab8e8]">
          <div className="w-[30px] h-[30px] relative bg-gradient-to-b from-[#3a8fd8] to-[#1b4a9c] rounded-[2px]">
            <span className="absolute left-0 top-[7px] w-[16px] h-[16px] bg-[#1c4fa8] text-white font-bold text-[12px] leading-[16px] text-center">W</span>
          </div>
        </Tbtn>
        <Tbtn c="ml-[11px] w-[51px] h-[50px] border-b-[2px] border-b-[#7ab8e8]">
          <svg viewBox="0 0 28 26" className="w-[28px] h-[26px]"><path d="M1 1h10l3 4h13v20H1z" fill="#f0be3c" /><path d="M1 8h26v17H1z" fill="#fbd96a" /><path d="M9 15h10v10H9z" fill="#2f7fc4" /><path d="M12 18h4v7h-4z" fill="#bfe0f5" /></svg>
        </Tbtn>
        <Tbtn c="ml-[11px] w-[51px] h-[50px] border-b-[2px] border-b-[#7ab8e8]">
          <div className="w-[30px] h-[30px] rounded-[5px] bg-[#1fb04b] flex items-center justify-center text-white font-bold text-[20px] leading-none">S</div>
        </Tbtn>
        <Tbtn c="ml-[11px] w-[50px] h-[50px] border-b-[2px] border-b-[#7ab8e8]">
          <div className="w-[30px] h-[30px] rounded-[5px] bg-white flex items-center justify-center">
            <svg viewBox="0 0 24 24" className="w-[24px] h-[24px]"><circle cx="12" cy="7" r="5" fill="none" stroke="#e64f4f" strokeWidth="2.500" /><circle cx="7" cy="14" r="5" fill="none" stroke="#2fa5e6" strokeWidth="2.500" /><circle cx="17" cy="14" r="5" fill="none" stroke="#2fa5e6" strokeWidth="2.500" /></svg>
          </div>
        </Tbtn>
        <div className="ml-auto flex items-center">
          <div className="w-[66px] flex flex-col items-center text-[15px] leading-[20px]">
            <span>28%</span><span>CPU使用</span>
          </div>
          <svg viewBox="0 0 18 10" className="ml-[23px] w-[17px] h-[10px]"><path d="M1 9l8-8 8 8" fill="none" stroke="#eee" strokeWidth="1.300" /></svg>
          <svg viewBox="0 0 20 14" className="ml-[13px] w-[20px] h-[14px]"><path d="M3 3h14v9H3z" fill="#ddd" stroke="#eee" /><path d="M18 6h2v3h-2zM1 0h3v3H1z" fill="#eee" /></svg>
          <svg viewBox="0 0 20 18" className="ml-[9px] w-[20px] h-[18px]"><path d="M1 6h3l4-4v14l-4-4H1z" fill="none" stroke="#eee" /><path d="M11 6q2 3 0 6M14 3q4 6 0 12" fill="none" stroke="#ccc" /></svg>
          <svg viewBox="0 0 18 18" className="ml-[13px] w-[17px] h-[17px]"><path d="M1 16Q2 6 14 2M5 16q1-6 9-9M9 16q1-3 5-5" fill="none" stroke="#ddd" /><circle cx="14" cy="15" r="1.500" fill="#eee" /></svg>
          <svg viewBox="0 0 20 20" className="ml-[16px] w-[20px] h-[20px]"><path d="M2 16q0-3 4-3l8-10q3-2 3 1L9 15q-2 3-5 3-2 0-2-2zM10 8l6 5" fill="none" stroke="#eee" /></svg>
          <span className="ml-[14px] w-[20px] text-center text-white font-bold text-[16px]">中</span>
          <div className="ml-[15px] w-[19px] h-[18px] rounded-[3px] bg-[#e8502a] flex items-center justify-center text-white font-bold italic text-[14px] leading-none -rotate-6">S</div>
          <div className="ml-[18px] w-[81px] flex flex-col items-center text-[16px] leading-[24px]">
            <span>21:28</span><span>2020/12/4</span>
          </div>
          <div className="ml-[22px] mr-[24px] w-[26px] h-[30px] relative">
            <svg viewBox="0 0 22 20" className="w-[22px] h-[20px] absolute left-0 top-0"><path d="M0 0h20v15H8l-4 4v-4H0z" fill="#fff" /><path d="M3 4h14M3 7h14M3 10h10" stroke="#666" /></svg>
            <span className="absolute left-[9px] top-[11px] w-[20px] h-[20px] rounded-full bg-[#444] border border-[#888] text-white font-bold text-[13px] leading-[18px] text-center">1</span>
          </div>
        </div>
      </div>

      <Chev c="left-[1906px] top-[35px]" />
      <Chev c="left-[1906px] top-[70px]" />
      <Chev c="left-[1906px] top-[165px]" />
      <Chev c="left-[1906px] top-[187px]" />
      <Chev c="left-[1902px] top-[989px]" />

      {/* Screen recorder */}
      <div className="absolute left-[1645px] top-[83px] flex items-center">
        <div className="w-[68px] h-[70px] rounded-full bg-[#3d3f4a] flex items-center justify-center text-[#f2f2f2] text-[14px] relative z-10">00:03:18</div>
        <div className="-ml-[24px] w-[129px] h-[44px] rounded-r-full bg-[#20222c] flex items-center pl-[41px]">
          <span className="w-[6px] h-[18px] bg-white" />
          <span className="ml-[4px] w-[6px] h-[18px] bg-white" />
          <span className="ml-[14px] w-[14px] h-[14px] bg-white" />
          <svg viewBox="0 0 14 14" className="ml-[16px] w-[14px] h-[14px]"><path d="M10 1l3 3-8 8-4 1 1-4z" fill="#fff" /></svg>
        </div>
      </div>
      <svg viewBox="0 0 14 22" className="absolute left-[1686px] top-[60px] w-[14px] h-[22px]"><path d="M1 1v16l4-3 3 7 3-1-3-7h5z" fill="#fff" stroke="#333" /></svg>
    </div>
  );
}
